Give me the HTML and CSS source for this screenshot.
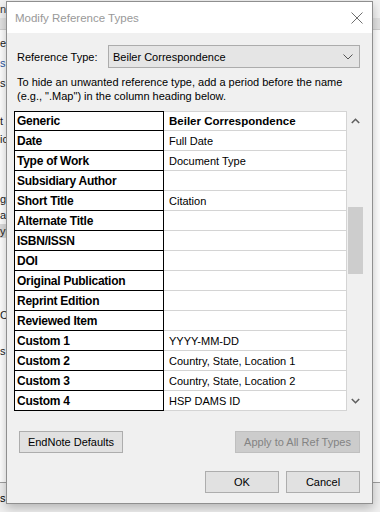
FILE: index.html
```html
<!DOCTYPE html>
<html>
<head>
<meta charset="utf-8">
<link rel="stylesheet" href="styles.css">
</head>
<body>
<div class="app">
  <div class="app-top"><span class="frag">nc</span></div>
  <div class="app-band"></div>
  <div class="app-list">
    <div class="ln l1">e</div>
    <div class="ln l2 blue">s</div>
    <div class="ln l3">s</div>
    <div class="ln l4">t</div>
    <div class="ln l5">ic</div>
    <div class="ln l6">g</div>
    <div class="ln l7">ac</div>
    <div class="ln l8"><span class="sel">yp</span></div>
    <div class="ln l9">Ci</div>
    <div class="ln l10">s</div>
  </div>
  <div class="app-bottom"><span class="frag">s</span></div>
</div>

<div class="dialog">
  <div class="titlebar">
    <span class="title">Modify Reference Types</span>
    <svg class="close" width="12" height="12" viewBox="0 0 12 12"><path d="M0.5 0.5 L11.5 11.5 M11.5 0.5 L0.5 11.5" stroke="#6f6f6f" stroke-width="1" fill="none"/></svg>
  </div>
  <div class="body">
    <div class="type-row">
      <span class="label">Reference Type:</span>
      <div class="select">
        <span>Beiler Correspondence</span>
        <svg width="10" height="6" viewBox="0 0 10 6"><path d="M0.5 0.5 L5 5 L9.5 0.5" stroke="#555" stroke-width="1" fill="none"/></svg>
      </div>
    </div>
    <p class="hint">To hide an unwanted reference type, add a period before the name<br>(e.g., ".Map") in the column heading below.</p>
    <div class="grid-wrap">
      <div class="grid">
        <div class="c1">Generic</div><div class="c2 b">Beiler Correspondence</div>
        <div class="c1">Date</div><div class="c2">Full Date</div>
        <div class="c1">Type of Work</div><div class="c2">Document Type</div>
        <div class="c1">Subsidiary Author</div><div class="c2"></div>
        <div class="c1">Short Title</div><div class="c2">Citation</div>
        <div class="c1">Alternate Title</div><div class="c2"></div>
        <div class="c1">ISBN/ISSN</div><div class="c2"></div>
        <div class="c1">DOI</div><div class="c2"></div>
        <div class="c1">Original Publication</div><div class="c2"></div>
        <div class="c1">Reprint Edition</div><div class="c2"></div>
        <div class="c1">Reviewed Item</div><div class="c2"></div>
        <div class="c1">Custom 1</div><div class="c2">YYYY-MM-DD</div>
        <div class="c1">Custom 2</div><div class="c2">Country, State, Location 1</div>
        <div class="c1">Custom 3</div><div class="c2">Country, State, Location 2</div>
        <div class="c1">Custom 4</div><div class="c2">HSP DAMS ID</div>
      </div>
      <div class="scrollbar">
        <svg class="arrow" width="9" height="6" viewBox="0 0 9 6"><path d="M0.8 5 L4.5 1.3 L8.2 5" stroke="#606060" stroke-width="1.6" fill="none"/></svg>
        <div class="track"><div class="thumb"></div></div>
        <svg class="arrow" width="9" height="6" viewBox="0 0 9 6"><path d="M0.8 1 L4.5 4.7 L8.2 1" stroke="#606060" stroke-width="1.6" fill="none"/></svg>
      </div>
    </div>
    <div class="btn-row">
      <button class="btn defaults">EndNote Defaults</button>
      <button class="btn disabled apply">Apply to All Ref Types</button>
    </div>
    <div class="btn-row end">
      <button class="btn small">OK</button>
      <button class="btn small">Cancel</button>
    </div>
  </div>
</div>
</body>
</html>
```

FILE: styles.css
```css
* { box-sizing: border-box; }
html, body { margin: 0; padding: 0; }
body {
  width: 380px;
  height: 512px;
  overflow: hidden;
  background: #f0f0f0;
  font-family: "Segoe UI", "Liberation Sans", sans-serif;
  position: relative;
}

/* background application window */
.app { width: 380px; height: 512px; display: flex; flex-direction: column; }
.app-top { height: 18px; background: #f3f3f3; font-size: 11px; color: #333; line-height: 18px; }
.app-band { height: 12px; background: #e3e3e3; border-bottom: 1px solid #d0d0d0; }
.app-list { flex: 1; background: #ffffff; }
.ln { font-size: 11px; color: #222; height: 14px; line-height: 14px; }
.blue { color: #2a55a0; }
.sel { background: #dcdcdc; display: inline-block; width: 8px; }
.l1 { margin-top: 6px; }
.l2 { margin-top: 6px; }
.l3 { margin-top: 6px; }
.l4 { margin-top: 24px; }
.l5 { margin-top: 4px; }
.l6 { margin-top: 46px; }
.l7 { margin-top: 2px; }
.l8 { margin-top: 2px; }
.l9 { margin-top: 70px; }
.l10 { margin-top: 22px; }
.app-bottom { height: 30px; background: #f0f0f0; border-top: 1px solid #a0a0a0; font-size: 11px; line-height: 14px; padding-top: 8px; }

/* dialog */
.dialog {
  position: absolute;
  left: 6px;
  top: 1px;
  width: 367px;
  height: 503px;
  background: #f0f0f0;
  border: 1px solid #8f8f8f;
  box-shadow: 0 4px 10px rgba(0,0,0,0.25);
  display: flex;
  flex-direction: column;
}
.titlebar {
  height: 31px;
  background: #ffffff;
  display: flex;
  align-items: center;
  justify-content: space-between;
  padding: 0 9px 0 8px;
}
.title { font-size: 11.5px; color: #999999; padding-top: 1px; }
.close { display: block; }

.body { flex: 1; display: flex; flex-direction: column; padding: 0 12px 0 7px; }
.type-row { display: flex; align-items: center; margin-top: 12px; height: 23px; }
.label { font-size: 11px; color: #000; width: 94px; padding-left: 3px; }
.select {
  flex: 1;
  height: 23px;
  background: #e5e5e5;
  border: 1px solid #acacac;
  display: flex;
  align-items: center;
  justify-content: space-between;
  padding: 0 6px 0 4px;
  font-size: 11px;
  color: #000;
}
.select svg { display: block; }

.hint { margin: 7px 0 0 3px; font-size: 11px; line-height: 14px; color: #000; white-space: nowrap; }

.grid-wrap { display: flex; margin-top: 8px; height: 300px; width: 350px; }
.grid {
  display: grid;
  grid-template-columns: 150px 183px;
  grid-auto-rows: 20px;
  align-content: start;
}
.c1 {
  border: 1px solid #000;
  border-top: none;
  font-family: "Liberation Sans", Arial, sans-serif;
  font-weight: bold;
  font-size: 12px;
  letter-spacing: -0.25px;
  padding-left: 2px;
  line-height: 20px;
  background: #fff;
  color: #000;
}
.c1:first-child { border-top: 1px solid #000; line-height: 19px; }
.c2 {
  border-bottom: 1px solid #d4d4d4;
  border-right: 1px solid #d4d4d4;
  font-size: 11px;
  line-height: 20px;
  padding-left: 5px;
  background: #fff;
  color: #000;
  white-space: nowrap;
}
.c2.b { border-top: 1px solid #d4d4d4; line-height: 19px; font-weight: bold; font-size: 11.5px; }
.scrollbar { width: 17px; display: flex; flex-direction: column; align-items: center; background: #f0f0f0; }
.arrow { display: block; margin: 7px 0; }
.track { flex: 1; width: 100%; padding: 76px 1px 0 1px; }
.thumb { height: 67px; background: #cdcdcd; }

.btn-row { display: flex; justify-content: space-between; margin-top: 20px; padding-left: 5px; }
.btn-row.end { justify-content: flex-end; gap: 7px; margin-top: 18px; }
.btn {
  font-family: "Segoe UI", "Liberation Sans", sans-serif;
  font-size: 11px;
  height: 22px;
  background: #e1e1e1;
  border: 1px solid #adadad;
  color: #000;
  padding: 0;
  margin: 0;
}
.defaults { width: 104px; }
.apply { width: 125px; }
.disabled { background: #cccccc; border-color: #bfbfbf; color: #838383; }
.small { width: 74px; }
```
